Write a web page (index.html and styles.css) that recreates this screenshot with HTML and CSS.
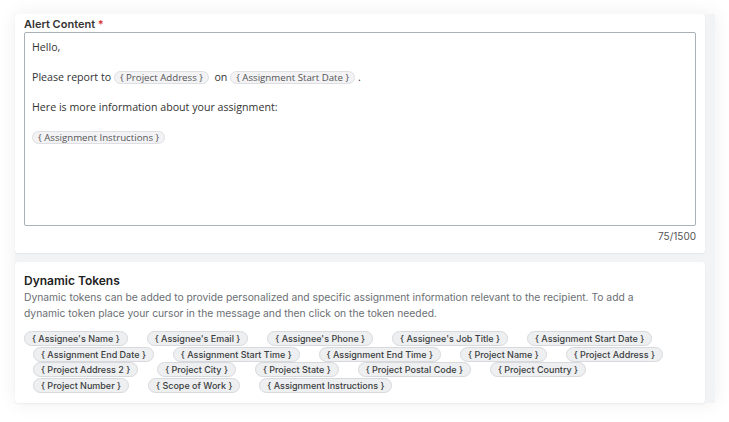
FILE: index.html
```html
<!DOCTYPE html>
<html>
<head>
<meta charset="utf-8">
<link rel="stylesheet" href="styles.css">
</head>
<body>
<div class="wrap">
  <section class="card card-alert">
    <label class="field-label">Alert Content <span class="req">*</span></label>
    <div class="editor">
      <p class="line">Hello,</p>
      <p class="line">&nbsp;</p>
      <p class="line">Please report to <span class="itoken">{ Project Address }</span>&nbsp; on <span class="itoken">{ Assignment Start Date }</span> .</p>
      <p class="line">&nbsp;</p>
      <p class="line">Here is more information about your assignment:</p>
      <p class="line">&nbsp;</p>
      <p class="line"><span class="itoken">{ Assignment Instructions }</span></p>
    </div>
    <div class="counter">75/1500</div>
  </section>
  <section class="card card-tokens">
    <h2 class="title">Dynamic Tokens</h2>
    <p class="desc">Dynamic tokens can be added to provide personalized and specific assignment information relevant to the recipient. To add a dynamic token place your cursor in the message and then click on the token needed.</p>
    <div class="tokens">
      <span class="token">{ Assignee's Name }</span>
      <span class="token">{ Assignee's Email }</span>
      <span class="token">{ Assignee's Phone }</span>
      <span class="token">{ Assignee's Job Title }</span>
      <span class="token">{ Assignment Start Date }</span>
      <span class="token">{ Assignment End Date }</span>
      <span class="token">{ Assignment Start Time }</span>
      <span class="token">{ Assignment End Time }</span>
      <span class="token">{ Project Name }</span>
      <span class="token">{ Project Address }</span>
      <span class="token">{ Project Address 2 }</span>
      <span class="token">{ Project City }</span>
      <span class="token">{ Project State }</span>
      <span class="token">{ Project Postal Code }</span>
      <span class="token">{ Project Country }</span>
      <span class="token">{ Project Number }</span>
      <span class="token">{ Scope of Work }</span>
      <span class="token">{ Assignment Instructions }</span>
    </div>
  </section>
</div>
</body>
</html>
```
FILE: styles.css
```css
html, body {
  margin: 0;
  padding: 0;
  background: #ffffff;
}
body {
  width: 729px;
  height: 422px;
  overflow: hidden;
  font-family: Inter, "Liberation Sans", sans-serif;
  color: #333;
}
.wrap {
  margin: 14px 0 0 15px;
  width: 690px;
  padding-right: 10px;
  background: #f2f3f5;
  box-shadow: 0 0 18px rgba(0, 0, 0, 0.07);
  display: flex;
  flex-direction: column;
  gap: 9px;
}
.card {
  background: #fff;
  border-radius: 3px;
  box-shadow: 0 1px 2px rgba(0, 0, 0, 0.05);
  padding: 0 9px;
}
.card-alert {
  padding-top: 3px;
  padding-bottom: 11px;
}
.field-label {
  display: block;
  font-size: 11px;
  font-weight: 600;
  color: #333;
  line-height: 15px;
}
.req {
  color: #d93636;
}
.editor {
  margin-top: 0;
  height: 179px;
  border: 1px solid #aab2b7;
  border-radius: 2px;
  padding: 7px 7px 6px;
  font-family: "Open Sans", Inter, sans-serif;
  font-size: 10.65px;
  color: #333;
}
.line {
  margin: 0;
  line-height: 15px;
  height: 15px;
  white-space: nowrap;
}
.itoken {
  display: inline-block;
  font-size: 9.7px;
  line-height: 11px;
  padding: 0 5px;
  border: 1px solid #dedfe2;
  border-radius: 8px;
  background: #f3f3f5;
  color: #555;
}
.counter {
  text-align: right;
  font-size: 10px;
  color: #555;
  line-height: 12px;
  margin-top: 4px;
}
.card-tokens {
  padding-top: 11px;
  padding-bottom: 10px;
}
.title {
  margin: 0;
  font-size: 12px;
  font-weight: 600;
  color: #222;
  line-height: 16px;
}
.desc {
  margin: 0 0 10px;
  max-width: 650px;
  font-size: 10.3px;
  line-height: 16px;
  color: #6b6f73;
}
.tokens {
  display: flex;
  flex-wrap: wrap;
  column-gap: 10px;
  row-gap: 0.5px;
}
.token {
  margin-left: 9px;
  font-size: 9px;
  font-weight: 500;
  line-height: 13px;
  padding: 0 7px;
  border: 1px solid #d8d9dc;
  border-radius: 8px;
  background: #eeeff1;
  color: #3a3d40;
  white-space: nowrap;
}
.token:first-child {
  margin-left: 0;
}
```
